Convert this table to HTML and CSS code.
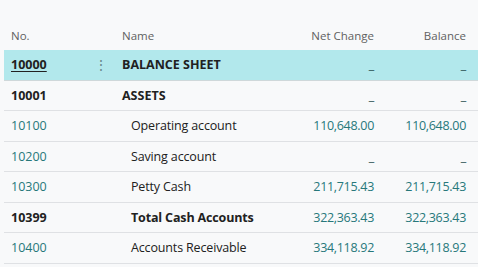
FILE: index.html
```html
<!DOCTYPE html>
<html>
<head>
<meta charset="utf-8">
<link rel="stylesheet" href="styles.css">
</head>
<body>
<div class="table">
  <div class="row head">
    <div class="c-no">No.</div>
    <div class="c-menu"></div>
    <div class="c-name">Name</div>
    <div class="c-num">Net Change</div>
    <div class="c-num">Balance</div>
  </div>
  <div class="row sel bold">
    <div class="c-no"><span class="u">10000</span></div>
    <div class="c-menu"><span class="dots">⋮</span></div>
    <div class="c-name">BALANCE SHEET</div>
    <div class="c-num dash">_</div>
    <div class="c-num dash">_</div>
  </div>
  <div class="row bold">
    <div class="c-no">10001</div>
    <div class="c-menu"></div>
    <div class="c-name">ASSETS</div>
    <div class="c-num dash">_</div>
    <div class="c-num dash">_</div>
  </div>
  <div class="row">
    <div class="c-no link">10100</div>
    <div class="c-menu"></div>
    <div class="c-name ind">Operating account</div>
    <div class="c-num">110,648.00</div>
    <div class="c-num">110,648.00</div>
  </div>
  <div class="row">
    <div class="c-no link">10200</div>
    <div class="c-menu"></div>
    <div class="c-name ind">Saving account</div>
    <div class="c-num dash">_</div>
    <div class="c-num dash">_</div>
  </div>
  <div class="row">
    <div class="c-no link">10300</div>
    <div class="c-menu"></div>
    <div class="c-name ind">Petty Cash</div>
    <div class="c-num">211,715.43</div>
    <div class="c-num">211,715.43</div>
  </div>
  <div class="row bold">
    <div class="c-no">10399</div>
    <div class="c-menu"></div>
    <div class="c-name ind">Total Cash Accounts</div>
    <div class="c-num">322,363.43</div>
    <div class="c-num">322,363.43</div>
  </div>
  <div class="row">
    <div class="c-no link">10400</div>
    <div class="c-menu"></div>
    <div class="c-name ind">Accounts Receivable</div>
    <div class="c-num">334,118.92</div>
    <div class="c-num">334,118.92</div>
  </div>
</div>
</body>
</html>
```
FILE: styles.css
```css
html, body {
  margin: 0;
  padding: 0;
  background: #f8f9fa;
}
body {
  font-family: "Open Sans", "Noto Sans", sans-serif;
  font-size: 12.5px;
  color: #212121;
  width: 478px;
  height: 267px;
  overflow: hidden;
}
.table {
  padding: 20px 0 0 4px;
}
.row {
  display: grid;
  grid-template-columns: 85px 33px 155px 97px 92px;
  align-items: center;
  height: 30.5px;
  box-sizing: border-box;
  border-bottom: 1px solid #dfe1e4;
}
.row > div {
  white-space: nowrap;
}
.row.head {
  height: 30px;
  border-bottom: none;
  color: #616161;
  font-size: 11.5px;
}
.c-no {
  padding-left: 7px;
}
.c-name.ind {
  padding-left: 9px;
  letter-spacing: -0.15px;
}
.c-num {
  text-align: right;
  color: #27787a;
  letter-spacing: -0.3px;
}
.head .c-num {
  color: #616161;
  letter-spacing: 0;
}
.bold .c-no, .bold .c-name {
  font-weight: 700;
}
.sel {
  background: #b2e8ec;
  border-bottom-color: #cfd8da;
}
.u {
  text-decoration: underline;
  text-underline-offset: 2px;
}
.link {
  color: #27787a;
}
.dots {
  color: #6b8a8c;
  font-size: 14px;
  padding-left: 5px;
}
.dash {
  color: #2a5556;
}
```
